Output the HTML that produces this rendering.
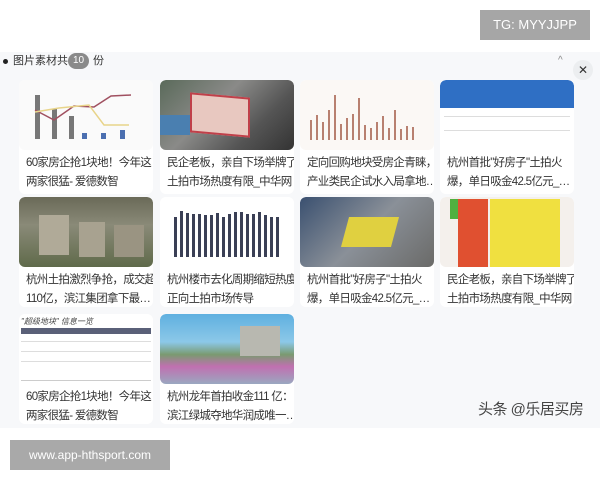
<!DOCTYPE html>
<html><head><meta charset="utf-8"><style>
*{margin:0;padding:0;box-sizing:border-box}
body{width:600px;height:480px;background:#fff;position:relative;overflow:hidden;font-family:"Liberation Sans","Noto Sans CJK SC",sans-serif}
.abs{position:absolute}
.panel{left:0;top:52px;width:600px;height:376px;background:#f7f8fa}
.card{position:absolute;width:134px;background:#fff;border-radius:6px;overflow:hidden}
.img{position:absolute;left:0;top:0;width:134px;height:70px;border-radius:6px;overflow:hidden}
.t{position:absolute;left:7px;top:74px;width:127px;font-size:11.5px;line-height:19px;color:#333;white-space:nowrap;overflow:hidden;letter-spacing:-0.7px;font-family:"Liberation Sans","Noto Sans CJK SC",sans-serif}
</style></head><body>
<div class="abs" style="left:480px;top:10px;width:110px;height:30px;background:#a6a6a6;color:#fff;font-size:13px;line-height:30px;text-align:center">TG: MYYJJPP</div>
<div class="abs panel"></div>
<div class="abs" style="left:3px;top:59px;width:5px;height:5px;border-radius:50%;background:#222"></div>
<div class="abs" style="left:13px;top:52px;font-size:11px;line-height:18px;color:#333">图片素材共</div>
<div class="abs" style="left:68px;top:53px;width:21px;height:16px;border-radius:8px;background:#8a8a8a;color:#fff;font-size:10px;line-height:16px;text-align:center">10</div>
<div class="abs" style="left:93px;top:52px;font-size:11px;line-height:18px;color:#333">份</div>
<div class="abs" style="left:558px;top:55px;font-size:10px;color:#888">^</div>
<div class="abs" style="left:573px;top:60px;width:20px;height:20px;border-radius:50%;background:#eceef0;color:#333;font-size:12px;line-height:20px;text-align:center">✕</div>

<!-- row1 -->
<div class="card" style="left:19px;top:80px;height:114px"><div class="img" style="background:#fafafa">
<svg width="134" height="70"><rect x="16" y="15" width="5" height="44" fill="#777"/><rect x="33" y="29" width="5" height="30" fill="#777"/><rect x="50" y="36" width="5" height="23" fill="#777"/><rect x="63" y="53" width="5" height="6" fill="#4b6fb0"/><rect x="82" y="53" width="5" height="6" fill="#4b6fb0"/><rect x="101" y="50" width="5" height="9" fill="#4b6fb0"/><polyline points="16,30 35,40 55,26 75,27 92,16 112,15" fill="none" stroke="#a05060" stroke-width="1.5"/><polyline points="16,32 40,28 70,25 85,45 110,45" fill="none" stroke="#e8d48a" stroke-width="1.5"/></svg></div>
<div class="t">60家房企抢1块地！今年这<br>两家很猛- 爱德数智</div></div>
<div class="card" style="left:160px;top:80px;height:114px"><div class="img" style="background:linear-gradient(135deg,#5a6a5a,#8a8a88 40%,#555 70%,#333)">
<div class="abs" style="left:30px;top:15px;width:60px;height:40px;background:#e8c8c0;border:2px solid #c0404a;transform:skewY(5deg)"></div>
<div class="abs" style="left:0;top:35px;width:30px;height:20px;background:#4a7fb0"></div></div>
<div class="t">民企老板，亲自下场举牌了<br>土拍市场热度有限_中华网</div></div>
<div class="card" style="left:300px;top:80px;height:114px"><div class="img" style="background:#fbf8f5">
<svg width="134" height="70"><g fill="#b88070"><rect x="10" y="40" width="2" height="20"/><rect x="16" y="35" width="2" height="25"/><rect x="22" y="42" width="2" height="18"/><rect x="28" y="30" width="2" height="30"/><rect x="34" y="15" width="2" height="45"/><rect x="40" y="44" width="2" height="16"/><rect x="46" y="38" width="2" height="22"/><rect x="52" y="34" width="2" height="26"/><rect x="58" y="18" width="2" height="42"/><rect x="64" y="45" width="2" height="15"/><rect x="70" y="48" width="2" height="12"/><rect x="76" y="42" width="2" height="18"/><rect x="82" y="36" width="2" height="24"/><rect x="88" y="48" width="2" height="12"/><rect x="94" y="30" width="2" height="30"/><rect x="100" y="49" width="2" height="11"/><rect x="106" y="46" width="2" height="14"/><rect x="112" y="47" width="2" height="13"/></g></svg></div>
<div class="t">定向回购地块受房企青睐，<br>产业类民企试水入局拿地…</div></div>
<div class="card" style="left:440px;top:80px;height:114px"><div class="img" style="background:#fff"><div class="abs" style="left:0;top:0;width:134px;height:28px;background:#2f6fc4;border-radius:6px 6px 0 0"></div>
<div class="abs" style="left:4px;top:36px;width:126px;height:1px;background:#ddd"></div><div class="abs" style="left:4px;top:50px;width:126px;height:1px;background:#ddd"></div></div>
<div class="t">杭州首批"好房子"土拍火<br>爆，单日吸金42.5亿元_…</div></div>

<!-- row2 -->
<div class="card" style="left:19px;top:197px;height:110px"><div class="img" style="background:linear-gradient(180deg,#6a6a58,#8a8a78 40%,#5f6a4a)">
<div class="abs" style="left:20px;top:18px;width:30px;height:40px;background:#b0aa98"></div><div class="abs" style="left:60px;top:25px;width:26px;height:35px;background:#a8a290"></div><div class="abs" style="left:95px;top:28px;width:30px;height:32px;background:#9a9482"></div></div>
<div class="t">杭州土拍激烈争抢，成交超<br>110亿，滨江集团拿下最…</div></div>
<div class="card" style="left:160px;top:197px;height:110px"><div class="img" style="background:#fff">
<svg width="134" height="70"><g fill="#3a3f55"><rect x="14" y="20" width="3" height="40"/><rect x="20" y="14" width="3" height="46"/><rect x="26" y="16" width="3" height="44"/><rect x="32" y="17" width="3" height="43"/><rect x="38" y="17" width="3" height="43"/><rect x="44" y="18" width="3" height="42"/><rect x="50" y="18" width="3" height="42"/><rect x="56" y="16" width="3" height="44"/><rect x="62" y="20" width="3" height="40"/><rect x="68" y="17" width="3" height="43"/><rect x="74" y="15" width="3" height="45"/><rect x="80" y="15" width="3" height="45"/><rect x="86" y="17" width="3" height="43"/><rect x="92" y="17" width="3" height="43"/><rect x="98" y="15" width="3" height="45"/><rect x="104" y="18" width="3" height="42"/><rect x="110" y="20" width="3" height="40"/><rect x="116" y="20" width="3" height="40"/></g></svg></div>
<div class="t">杭州楼市去化周期缩短热度<br>正向土拍市场传导</div></div>
<div class="card" style="left:300px;top:197px;height:110px"><div class="img" style="background:linear-gradient(135deg,#3a5070,#8a9098 50%,#6a6a68)">
<div class="abs" style="left:45px;top:20px;width:50px;height:30px;background:#e0d040;transform:skewX(-15deg)"></div></div>
<div class="t">杭州首批"好房子"土拍火<br>爆，单日吸金42.5亿元_…</div></div>
<div class="card" style="left:440px;top:197px;height:110px"><div class="img" style="background:#f4f0ec">
<div class="abs" style="left:10px;top:2px;width:12px;height:20px;background:#50b040"></div><div class="abs" style="left:18px;top:2px;width:30px;height:68px;background:#e05030"></div><div class="abs" style="left:50px;top:2px;width:70px;height:68px;background:#f0e040"></div></div>
<div class="t">民企老板，亲自下场举牌了<br>土拍市场热度有限_中华网</div></div>

<!-- row3 -->
<div class="card" style="left:19px;top:314px;height:110px"><div class="img" style="background:#fff">
<div class="abs" style="left:2px;top:2px;font-size:8px;color:#444;font-style:italic">"超级地块" 信息一览</div>
<div class="abs" style="left:2px;top:14px;width:130px;height:6px;background:#5a6078"></div>
<div class="abs" style="left:2px;top:27px;width:130px;height:1px;background:#ddd"></div><div class="abs" style="left:2px;top:37px;width:130px;height:1px;background:#ddd"></div><div class="abs" style="left:2px;top:47px;width:130px;height:1px;background:#ddd"></div><div class="abs" style="left:2px;top:66px;width:130px;height:1px;background:#ccc"></div></div>
<div class="t">60家房企抢1块地！今年这<br>两家很猛- 爱德数智</div></div>
<div class="card" style="left:160px;top:314px;height:110px"><div class="img" style="background:linear-gradient(180deg,#5fb0e0 0%,#8cc8e8 40%,#7a9a70 58%,#c070b0 75%,#9aa8c0 100%)">
<div class="abs" style="left:80px;top:12px;width:40px;height:30px;background:#b8b8b0"></div></div>
<div class="t">杭州龙年首拍收金111 亿：<br>滨江绿城夺地华润成唯一…</div></div>

<div class="abs" style="left:478px;top:398px;font-size:15px;color:#444;white-space:nowrap;letter-spacing:-0.5px">头条 @乐居买房</div>
<div class="abs" style="left:10px;top:440px;width:160px;height:30px;background:#a9a9a9;color:#fff;font-size:12px;line-height:30px;text-align:center">www.app-hthsport.com</div>
</body></html>
